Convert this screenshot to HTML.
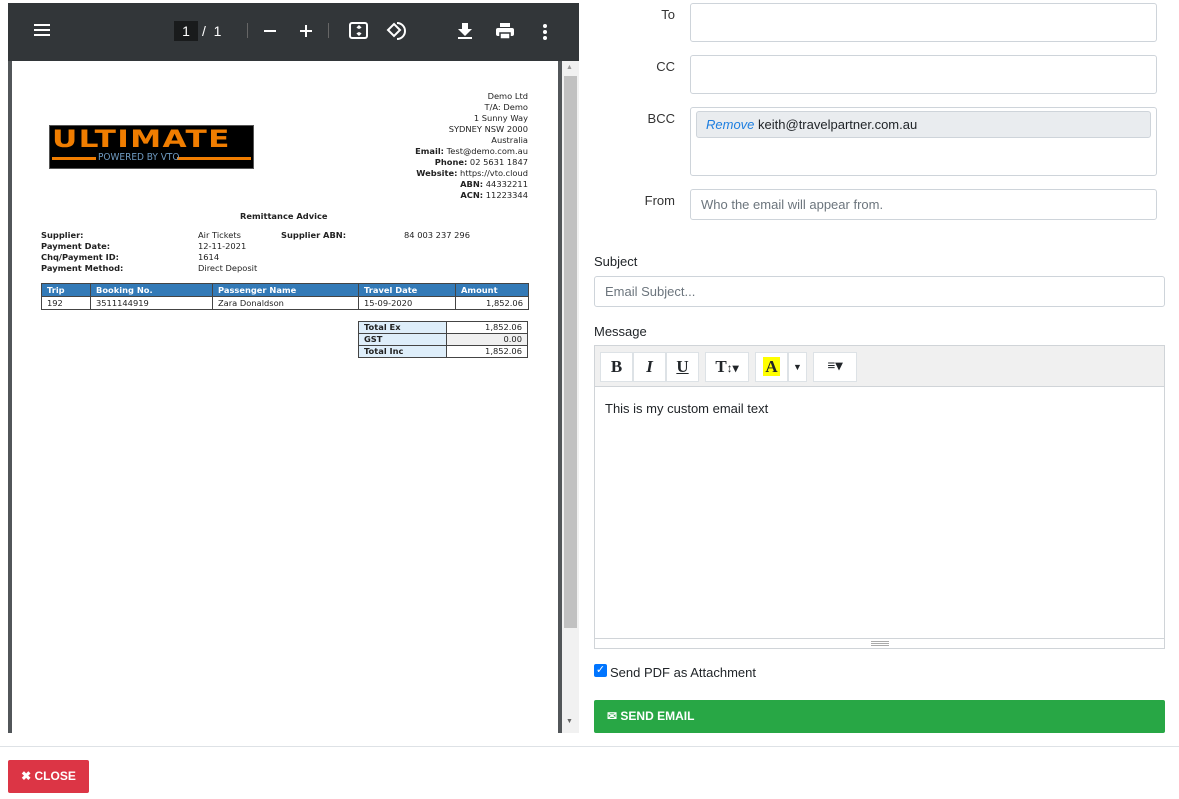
<!DOCTYPE html>
<html><head><meta charset="utf-8"><style>
*{box-sizing:border-box;margin:0;padding:0}
body{width:1179px;height:799px;background:#fff;position:relative;overflow:hidden;font-family:"Liberation Sans",sans-serif;color:#212529}
.a{position:absolute}
.pdf{font-family:"DejaVu Sans",sans-serif;font-size:8.3px;color:#222;line-height:11px}
.inp{position:absolute;border:1px solid #ced4da;border-radius:3px;background:#fff}
.lbl{position:absolute;font-size:13px;color:#333;text-align:right;width:60px}
table{border-collapse:collapse}
.t1 td{border:1px solid #444;padding:0 5px;height:13px;font-size:8.3px}
.t1 tr.h td{background:#337ab7;color:#fff;font-weight:bold}
.t2 td{border:1px solid #444;padding:0 5px;height:12px;font-size:8.3px}
.tb{position:absolute;top:352px;height:30px;border:1px solid #dde2e6;background:#fff;font-family:"Liberation Serif",serif;font-weight:bold;font-size:17px;text-align:center;line-height:28px}
</style></head><body>
<div class="a" style="left:8px;top:3px;width:571px;height:730px;background:#525659"></div>
<div class="a" style="left:8px;top:3px;width:571px;height:58px;background:#323639"></div>
<div class="a" style="left:34px;top:24px;width:16px;height:2px;background:#fff;box-shadow:0 5px 0 #fff,0 10px 0 #fff"></div>
<div class="a" style="left:174px;top:21px;width:24px;height:20px;background:#191b1c;color:#fff;font-size:14px;text-align:center;line-height:20px">1</div>
<div class="a" style="left:202px;top:21px;color:#fff;font-size:14px;line-height:20px">/&nbsp;&nbsp;1</div>
<div class="a" style="left:247px;top:23px;width:1px;height:15px;background:#666"></div>
<div class="a" style="left:328px;top:23px;width:1px;height:15px;background:#666"></div>
<div class="a" style="left:264px;top:30px;width:12px;height:2px;background:#fff"></div>
<div class="a" style="left:300px;top:30px;width:12px;height:2px;background:#fff"></div>
<div class="a" style="left:305px;top:25px;width:2px;height:12px;background:#fff"></div>
<svg class="a" style="left:348px;top:20px" width="22" height="22" viewBox="0 0 22 22"><rect x="2" y="3" width="17" height="15" rx="2" fill="none" stroke="#fff" stroke-width="2"/><path d="M11 6v3M9 8l2-2 2 2M11 15v-3M9 13l2 2 2-2" stroke="#fff" stroke-width="1.5" fill="none"/></svg>
<svg class="a" style="left:384px;top:20px" width="22" height="22" viewBox="0 0 22 22"><path d="M10 4l6 6-6 6-6-6z" fill="none" stroke="#fff" stroke-width="2"/><path d="M13 3a8 8 0 0 1 0 16" fill="none" stroke="#fff" stroke-width="2"/></svg>
<svg class="a" style="left:456px;top:21px" width="18" height="20" viewBox="0 0 18 20"><path d="M6 2h6v6h4l-7 7-7-7h4z" fill="#fff"/><rect x="2" y="16" width="14" height="2" fill="#fff"/></svg>
<svg class="a" style="left:495px;top:21px" width="20" height="20" viewBox="0 0 20 20"><rect x="5" y="2" width="10" height="4" fill="#fff"/><rect x="1" y="7" width="18" height="8" rx="2" fill="#fff"/><rect x="5" y="12" width="10" height="6" fill="#fff" stroke="#323639" stroke-width="1.5"/></svg>
<div class="a" style="left:543px;top:24px;width:4px;height:4px;border-radius:2px;background:#fff;box-shadow:0 6px 0 #fff,0 12px 0 #fff"></div>
<div class="a" style="left:12px;top:61px;width:546px;height:672px;background:#fff"></div>
<div class="a" style="left:562px;top:61px;width:17px;height:672px;background:#f1f1f1"></div>
<div class="a" style="left:564px;top:76px;width:13px;height:552px;background:#c1c1c1"></div>
<div class="a" style="left:566px;top:64px;font-size:7px;color:#999">▲</div>
<div class="a" style="left:566px;top:718px;font-size:7px;color:#666">▼</div>
<div class="a" style="left:49px;top:125px;width:205px;height:44px;background:#000;border:1px solid #555"></div>
<div class="a" style="left:52px;top:126px;width:154px;font-family:'DejaVu Sans',sans-serif;font-weight:bold;font-size:24px;line-height:26px;color:#f07d00;letter-spacing:1px;transform:scaleX(1.3);transform-origin:0 0">ULTIMATE</div>
<div class="a" style="left:52px;top:157px;width:44px;height:3px;background:#f07d00"></div>
<div class="a" style="left:177px;top:157px;width:74px;height:3px;background:#f07d00"></div>
<div class="a" style="left:98px;top:152px;font-size:10px;color:#6f9bc2;font-family:'DejaVu Sans Condensed','DejaVu Sans',sans-serif">POWERED BY VTO</div>
<div class="a pdf" style="right:651px;top:91px;text-align:right">Demo Ltd<br>T/A: Demo<br>1 Sunny Way<br>SYDNEY NSW 2000<br>Australia<br><b>Email:</b> Test@demo.com.au<br><b>Phone:</b> 02 5631 1847<br><b>Website:</b> https://vto.cloud<br><b>ABN:</b> 44332211<br><b>ACN:</b> 11223344</div>
<div class="a pdf" style="left:240px;top:211px;font-weight:bold">Remittance Advice</div>
<div class="a pdf" style="left:41px;top:230px;font-weight:bold">Supplier:<br>Payment Date:<br>Chq/Payment ID:<br>Payment Method:</div>
<div class="a pdf" style="left:198px;top:230px">Air Tickets<br>12-11-2021<br>1614<br>Direct Deposit</div>
<div class="a pdf" style="left:281px;top:230px;font-weight:bold">Supplier ABN:</div>
<div class="a pdf" style="left:404px;top:230px">84 003 237 296</div>
<table class="a t1 pdf" style="left:41px;top:283px;width:488px">
<tr class="h"><td style="width:49px">Trip</td><td style="width:122px">Booking No.</td><td style="width:146px">Passenger Name</td><td style="width:97px">Travel Date</td><td>Amount</td></tr>
<tr><td>192</td><td>3511144919</td><td>Zara Donaldson</td><td>15-09-2020</td><td style="text-align:right">1,852.06</td></tr></table>
<table class="a t2 pdf" style="left:358px;top:321px;width:170px">
<tr><td style="background:#deeefa;font-weight:bold;width:88px">Total Ex</td><td style="text-align:right">1,852.06</td></tr>
<tr><td style="background:#deeefa;font-weight:bold">GST</td><td style="text-align:right;background:#f0f0f0">0.00</td></tr>
<tr><td style="background:#deeefa;font-weight:bold">Total Inc</td><td style="text-align:right">1,852.06</td></tr></table>
<div class="lbl" style="left:615px;top:7px">To</div>
<div class="inp" style="left:690px;top:3px;width:467px;height:39px"></div>
<div class="lbl" style="left:615px;top:59px">CC</div>
<div class="inp" style="left:690px;top:55px;width:467px;height:39px"></div>
<div class="lbl" style="left:615px;top:111px">BCC</div>
<div class="inp" style="left:690px;top:107px;width:467px;height:69px"></div>
<div class="a" style="left:696px;top:111px;width:455px;height:27px;background:#e9ecef;border:1px solid #ced4da;border-radius:3px;font-size:13px;line-height:26px;padding-left:9px"><i style="color:#1e7fe0">Remove</i> keith@travelpartner.com.au</div>
<div class="lbl" style="left:615px;top:193px">From</div>
<div class="inp" style="left:690px;top:189px;width:467px;height:31px;font-size:13px;color:#6c757d;line-height:30px;padding-left:10px">Who the email will appear from.</div>
<div class="a" style="left:594px;top:254px;font-size:13px">Subject</div>
<div class="inp" style="left:594px;top:276px;width:571px;height:31px;font-size:13px;color:#6c757d;line-height:30px;padding-left:10px">Email Subject...</div>
<div class="a" style="left:594px;top:324px;font-size:13px">Message</div>
<div class="a" style="left:594px;top:345px;width:571px;height:304px;border:1px solid #d0d4d8;background:#fff"></div>
<div class="a" style="left:595px;top:346px;width:569px;height:41px;background:#f0f0f0;border-bottom:1px solid #d0d4d8"></div>
<div class="tb" style="left:600px;width:33px">B</div>
<div class="tb" style="left:633px;width:33px;font-style:italic">I</div>
<div class="tb" style="left:666px;width:33px;text-decoration:underline">U</div>
<div class="tb" style="left:705px;width:44px">T<span style="font-size:12px">↕▾</span></div>
<div class="tb" style="left:755px;width:33px"><span style="background:#ff0;padding:0 2px">A</span></div>
<div class="tb" style="left:788px;width:19px;font-size:9px">▼</div>
<div class="tb" style="left:813px;width:44px;font-size:14px">≡▾</div>
<div class="a" style="left:605px;top:401px;font-size:13px">This is my custom email text</div>
<div class="a" style="left:595px;top:638px;width:569px;height:1px;background:#d0d4d8"></div>
<div class="a" style="left:871px;top:641px;width:18px;height:1px;background:#aaa;box-shadow:0 2px 0 #aaa,0 4px 0 #aaa"></div>
<div class="a" style="left:594px;top:664px;width:13px;height:13px;background:#0075ff;border-radius:2px;color:#fff;font-size:11px;line-height:13px;text-align:center">✓</div>
<div class="a" style="left:610px;top:665px;font-size:13px">Send PDF as Attachment</div>
<div class="a" style="left:594px;top:700px;width:571px;height:33px;background:#28a745;border-radius:2px;color:#fff;font-weight:bold;font-size:12px;line-height:33px;padding-left:13px">✉ SEND EMAIL</div>
<div class="a" style="left:0;top:746px;width:1179px;height:1px;background:#dee2e6"></div>
<div class="a" style="left:8px;top:760px;width:81px;height:33px;background:#dc3545;border-radius:2px;color:#fff;font-weight:bold;font-size:12px;line-height:33px;text-align:center">✖ CLOSE</div>
</body></html>
